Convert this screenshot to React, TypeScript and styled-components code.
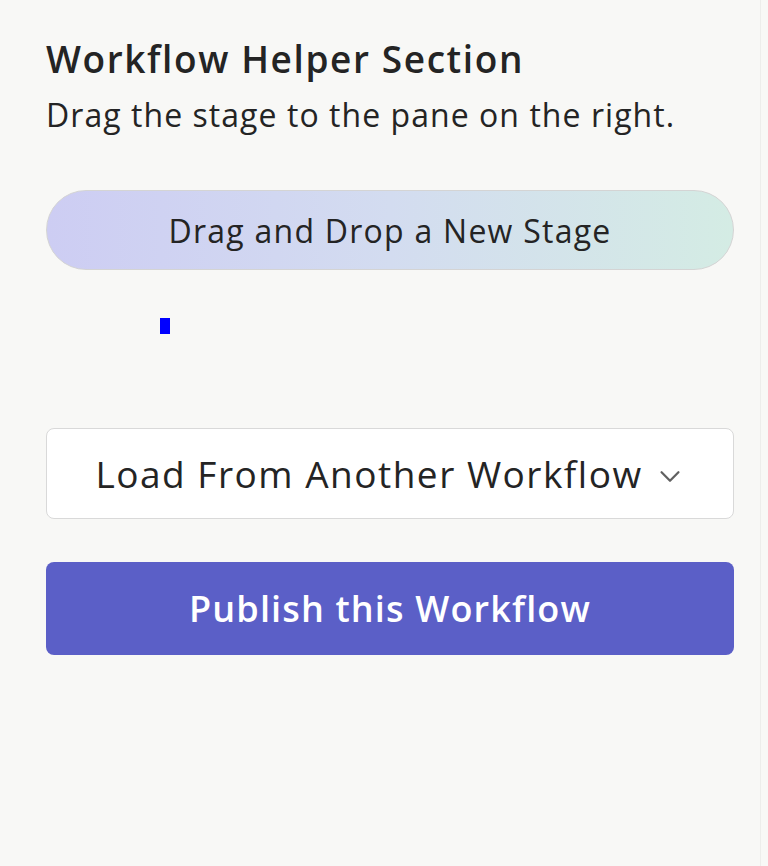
import React from "react";
import styled, {createGlobalStyle} from "styled-components";

const GlobalStyle = createGlobalStyle`
  html, body {
    margin: 0;
    padding: 0;
    height: 100%;
    background: #f8f8f6;
  }
  #root {
    min-height: 100%;
  }
`;

const FONT = `"Segoe UI", "Open Sans", "Noto Sans", sans-serif`;

function App() {
    return (
        <>
            <GlobalStyle/>
            <Pane>
                <Headline>Workflow Helper Section</Headline>
                <Description>Drag the stage to the pane on the right.</Description>
                <StagePill draggable>Drag and Drop a New Stage</StagePill>
                <DropZone>
                    <Caret/>
                </DropZone>
                <Dropdown>
                    <span>Load From Another Workflow</span>
                    <Chevron viewBox="0 0 16 16">
                        <path d="M3.5 6 L8 10.5 L12.5 6" fill="none" stroke="#616161" strokeWidth="1.2"
                              strokeLinecap="round" strokeLinejoin="round"/>
                    </Chevron>
                </Dropdown>
                <PublishButton>Publish this Workflow</PublishButton>
            </Pane>
        </>
    );
}

const Pane = styled.div`
  box-sizing: border-box;
  width: 761px;
  min-height: 866px;
  padding: 36px 26px 0 46px;
  border-right: 1px solid #ededeb;
  font-family: ${FONT};
  color: #242424;
  display: flex;
  flex-direction: column;
`

const Headline = styled.h2`
  margin: 0;
  font-size: 37px;
  font-weight: 600;
  letter-spacing: 1.6px;
  line-height: 46px;
`

const Description = styled.p`
  margin: 12px 0 0;
  font-size: 32px;
  font-weight: 400;
  letter-spacing: 1.05px;
  line-height: 42px;
`

const StagePill = styled.div`
  box-sizing: border-box;
  margin-top: 54px;
  height: 80px;
  border-radius: 40px;
  border: 1.5px solid #d4d4d4;
  background: linear-gradient(90deg, #cdcdf3 0%, #d3dcf0 50%, #d4ece4 100%);
  display: flex;
  align-items: center;
  justify-content: center;
  font-size: 32px;
  letter-spacing: 1.25px;
  cursor: grab;
`

const DropZone = styled.div`
  height: 158px;
  position: relative;
`

const Caret = styled.div`
  position: absolute;
  left: 114px;
  top: 48px;
  width: 10px;
  height: 16px;
  background: #0000ff;
`

const Dropdown = styled.button`
  box-sizing: border-box;
  height: 91px;
  border-radius: 8px;
  border: 1.5px solid #d9d9d9;
  background: #ffffff;
  display: flex;
  align-items: center;
  justify-content: center;
  gap: 12px;
  font-family: ${FONT};
  font-size: 37px;
  letter-spacing: 1.5px;
  color: #242424;
  padding: 0 0 0 0;
`

const Chevron = styled.svg`
  width: 30px;
  height: 30px;
  margin-top: 4px;
`

const PublishButton = styled.button`
  box-sizing: border-box;
  margin-top: 43px;
  height: 93px;
  border-radius: 8px;
  border: none;
  background: #5b5fc7;
  color: #ffffff;
  font-family: ${FONT};
  font-size: 36px;
  font-weight: 600;
  letter-spacing: 1.15px;
`

export default App;
